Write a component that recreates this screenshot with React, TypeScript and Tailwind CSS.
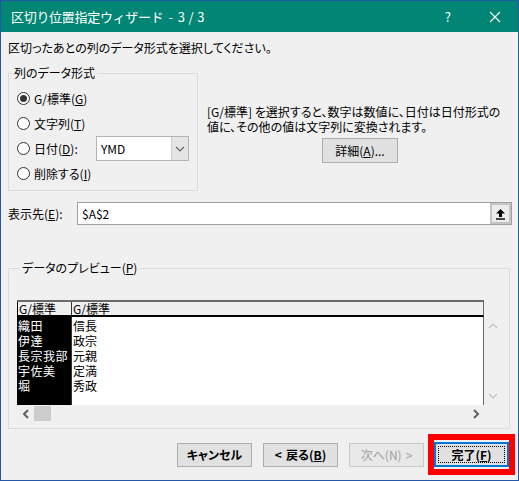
import React from 'react';

const ui = "font-['Noto_Sans_CJK_JP','Noto_Sans',sans-serif] [font-feature-settings:'palt']";
const grid = "font-['Noto_Sans_CJK_JP','Noto_Sans',sans-serif]";

const Radio = ({ checked, children }: { checked?: boolean; children: React.ReactNode }) => (
  <div className="flex items-center">
    <span className="w-[13px] h-[13px] rounded-full border border-[#333333] bg-white flex items-center justify-center">
      {checked && <span className="w-[7px] h-[7px] rounded-full bg-[#333333]" />}
    </span>
    <span className="ml-[4px]">{children}</span>
  </div>
);

const Btn = ({ children, disabled, className = '' }: { children: React.ReactNode; disabled?: boolean; className?: string }) => (
  <div
    className={
      'h-[24px] w-[75px] flex items-center justify-center border ' +
      (disabled ? 'bg-[#cccccc] border-[#bfbfbf] text-[#a0a0a0] ' : 'bg-[#e1e1e1] border-[#adadad] ') +
      className
    }
  >
    {children}
  </div>
);

const Chevron = ({ dir, color }: { dir: 'up' | 'down' | 'left' | 'right'; color: string }) => {
  const d = {
    up: 'M1 6 L5 2 L9 6',
    down: 'M1 2 L5 6 L9 2',
    left: 'M6 1 L2 5 L6 9',
    right: 'M2 1 L6 5 L2 9',
  }[dir];
  const w = dir === 'up' || dir === 'down' ? 10 : 8;
  const h = dir === 'up' || dir === 'down' ? 8 : 10;
  return (
    <svg width={w} height={h} viewBox={`0 0 ${w} ${h}`}>
      <path d={d} fill="none" stroke={color} strokeWidth={dir === 'left' || dir === 'right' ? 2 : 1.2} />
    </svg>
  );
};

const rows = [
  ['織田', '信長'],
  ['伊達', '政宗'],
  ['長宗我部', '元親'],
  ['宇佐美', '定満'],
  ['堀', '秀政'],
];

export default function App() {
  return (
    <div className={`w-[519px] h-[481px] border border-[#2457a5] flex flex-col text-[12px] text-black ${ui}`}>
      {/* title bar */}
      <div className="h-[31px] bg-[#018574] flex items-center text-white shrink-0">
        <span className="ml-[10px] text-[13px] [font-feature-settings:normal] tracking-[-0.3px] flex">
          <span>区切り位置指定ウィザード</span>
          <span className="ml-[5px]">-</span>
          <span className="ml-[5px]">3</span>
          <span className="ml-[4px]">/</span>
          <span className="ml-[4px]">3</span>
        </span>
        <span className="ml-auto mr-[38px] text-[13px]">?</span>
        <svg width="12" height="12" viewBox="0 0 12 12" className="mr-[17px]">
          <path d="M1 1 L11 11 M11 1 L1 11" stroke="#ffffff" strokeWidth="1.1" />
        </svg>
      </div>

      {/* body */}
      <div className="flex-1 bg-[#f0f0f0] flex flex-col pl-[7px] pt-[8px]">
        <div className="leading-[16px]">区切ったあとの列のデータ形式を選択してください。</div>

        <div className="flex mt-[9px]">
          <fieldset className="border border-[#dcdcdc] w-[190px] pb-[4px]">
            <legend className="ml-[3px] px-[2px] leading-[16px]">列のデータ形式</legend>
            <div className="pt-[5px] pl-[8px]">
              <div className="h-[25px] flex items-center">
                <Radio checked>
                  G/標準(<u>G</u>)
                </Radio>
              </div>
              <div className="h-[25px] flex items-center">
                <Radio>
                  文字列(<u>T</u>)
                </Radio>
              </div>
              <div className="h-[25px] flex items-center">
                <div className="w-[79px]">
                  <Radio>
                    日付(<u>D</u>):
                  </Radio>
                </div>
                <div className="w-[93px] h-[25px] border border-[#b4b4b4] bg-white flex items-center">
                  <span className="pl-[4px] flex-1">YMD</span>
                  <div className="w-[17px] h-full bg-[#e5e5e5] border-l border-[#cccccc] flex items-center justify-center">
                    <Chevron dir="down" color="#606060" />
                  </div>
                </div>
              </div>
              <div className="h-[25px] flex items-center">
                <Radio>
                  削除する(<u>I</u>)
                </Radio>
              </div>
            </div>
          </fieldset>

          <div className="pl-[9px] pt-[39px]">
            <div className="leading-[15px]">
              [G/標準] を選択すると、数字は数値に、日付は日付形式の
              <br />
              値に、その他の値は文字列に変換されます。
            </div>
            <Btn className="mt-[4px] ml-[115px] !w-[76px] !h-[25px]">
              詳細(<u>A</u>)...
            </Btn>
          </div>
        </div>

        <div className="flex items-center mt-[11px] h-[23px]">
          <span className="w-[69px]">
            表示先(<u>E</u>):
          </span>
          <div className="w-[435px] h-[23px] border border-[#a0a0a0] bg-white flex items-center">
            <span className="pl-[4px] flex-1">$A$2</span>
            <div className="w-[21px] h-[21px] border-2 border-[#c4c4c4] bg-[#ececec] flex items-center justify-center">
              <svg width="11" height="12" viewBox="0 0 11 12">
                <path d="M5.5 1 L10 5.5 L7 5.5 L7 9 L4 9 L4 5.5 L1 5.5 Z" fill="#000000" />
                <rect x="1" y="10.3" width="9" height="1.4" fill="#000000" />
              </svg>
            </div>
          </div>
        </div>

        <fieldset className="border border-[#dcdcdc] w-[502px] mt-[35px] pl-[8px] pb-[6px]">
          <legend className="ml-[3px] px-[2px] leading-[16px]">
            データのプレビュー(<u>P</u>)
          </legend>
          <div className={`flex mt-[24px] text-[12px] leading-[15px] ${grid}`}>
            <div className="w-[467px] flex flex-col">
              <div className="h-[17px] flex bg-[#f0f0f0] border-t-2 border-[#6a6a6a] border-b-2 border-b-black border-r border-r-[#6a6a6a]">
                <div className="w-[55px] border-l border-black border-r border-r-[#333333] pl-[1px] leading-[13px]">G/標準</div>
                <div className="pl-[1px] leading-[13px]">G/標準</div>
              </div>
              <div className="h-[88px] flex bg-white border-r border-[#6a6a6a]">
                <div className="w-[55px] bg-black text-white border-r border-[#333333] pt-[1px]">
                  {rows.map((r) => (
                    <div key={r[0]} className="h-[15px] leading-[15px] pl-[1px] whitespace-nowrap tracking-[0.5px]">
                      {r[0]}
                    </div>
                  ))}
                </div>
                <div className="pt-[1px]">
                  {rows.map((r) => (
                    <div key={r[1]} className="h-[15px] leading-[15px] pl-[1px]">
                      {r[1]}
                    </div>
                  ))}
                </div>
              </div>
              <div className="h-[17px] flex items-center bg-[#f0f0f0]">
                <div className="w-[17px] flex items-center justify-center">
                  <Chevron dir="left" color="#606060" />
                </div>
                <div className="w-[17px] h-[15px] bg-[#cdcdcd]" />
                <div className="flex-1" />
                <div className="w-[17px] flex items-center justify-center">
                  <Chevron dir="right" color="#606060" />
                </div>
              </div>
            </div>
            <div className="w-[17px] flex flex-col">
              <div className="h-[17px]" />
              <div className="h-[88px] flex flex-col items-center justify-between py-[5px]">
                <Chevron dir="up" color="#c0c0c0" />
                <Chevron dir="down" color="#c0c0c0" />
              </div>
            </div>
          </div>
        </fieldset>

        <div className="flex-1 flex items-center justify-end pr-[3px] gap-[11px] font-bold">
          <Btn>キャンセル</Btn>
          <Btn>
            &lt;<span className="ml-[4px]">戻る(<u>B</u>)</span>
          </Btn>
          <Btn disabled className="!bg-[#e8e8e8] !border-[#c8c8c8] font-normal">
            次へ(N)<span className="ml-[4px]">&gt;</span>
          </Btn>
          <div className="border-[6px] border-[#ff0000] py-[2px] -ml-[7px]">
            <div className="relative h-[25px] w-[75px] flex items-center justify-center bg-[#e1e1e1] border-2 border-[#0078d7]">
              <div className="absolute inset-[2px] border border-dotted border-black" />
              完了(<u>F</u>)
            </div>
          </div>
        </div>
      </div>
    </div>
  );
}
